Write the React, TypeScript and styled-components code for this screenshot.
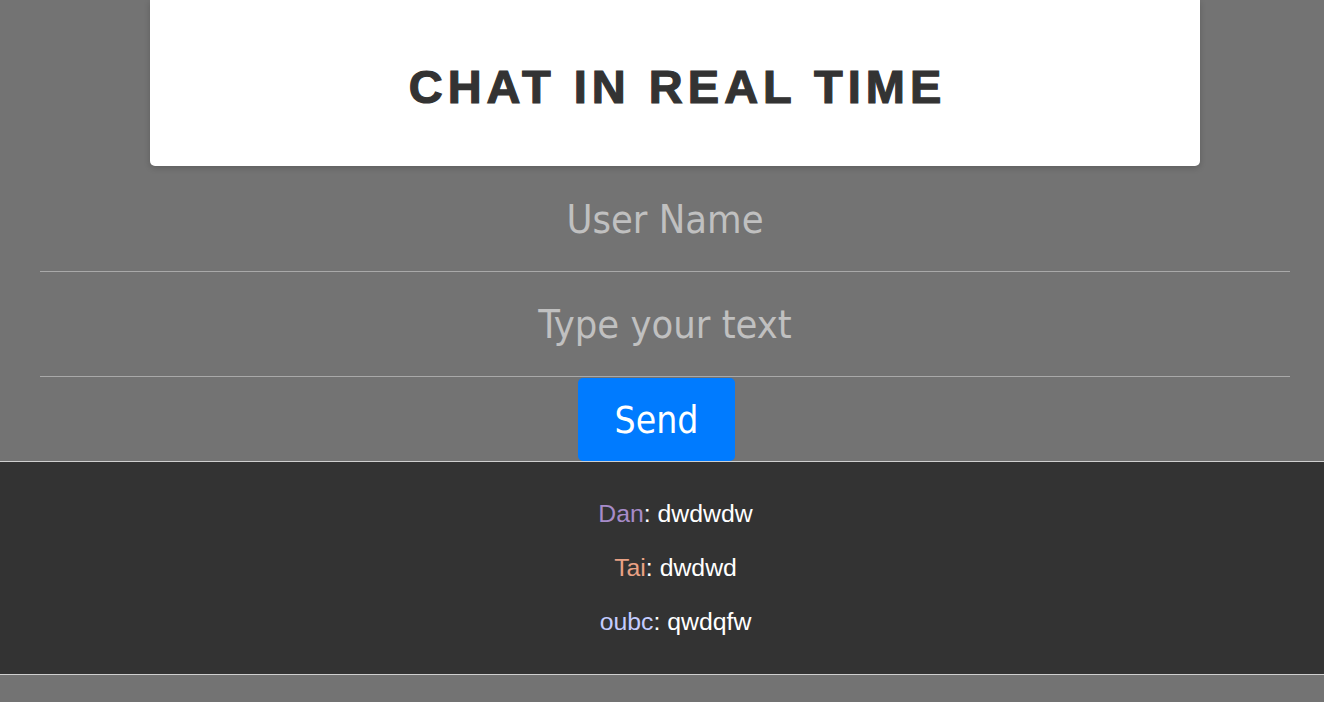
import React from "react";
import styled, { createGlobalStyle } from "styled-components";

const Global = createGlobalStyle`
  html, body { margin: 0; padding: 0; background: #737373; }
  body { font-family: "Liberation Sans", Arial, sans-serif; }
  * { box-sizing: border-box; }
`;

const Page = styled.div`
  display: flex;
  flex-direction: column;
  align-items: stretch;
  min-height: 702px;
  background: #737373;
`;

const Header = styled.header`
  margin: 0 124px 0 150px;
  height: 166px;
  background: #fff;
  border-radius: 0 0 5px 5px;
  box-shadow: 0 2px 6px rgba(0, 0, 0, 0.18);
  display: flex;
  align-items: center;
  justify-content: center;
  padding-top: 6px;
`;

const Title = styled.h1`
  margin: 0 0 0 5px;
  font-family: "Liberation Sans", Arial, sans-serif;
  font-weight: 900;
  font-size: 47px;
  letter-spacing: 5px;
  color: #333;
  -webkit-text-stroke: 1.2px #333;
  text-transform: uppercase;
`;

const Form = styled.form`
  display: flex;
  flex-direction: column;
  align-items: center;
  padding: 1px 34px 0 40px;
`;

const Field = styled.input`
  width: 100%;
  height: 105px;
  background: transparent;
  border: none;
  border-bottom: 1px solid #a9a9a9;
  outline: none;
  text-align: center;
  color: #fff;
  font-family: "DejaVu Sans Condensed", "DejaVu Sans", sans-serif;
  font-stretch: condensed;
  font-size: 39.5px;
  padding: 0;
  &::placeholder { color: #c0c0c0; }
`;

const SendButton = styled.button`
  margin: 1px 17px 0 0;
  width: 157px;
  height: 83px;
  background: #007bff;
  border: none;
  border-radius: 5px;
  color: #fff;
  font-family: "DejaVu Sans Condensed", "DejaVu Sans", sans-serif;
  font-stretch: condensed;
  font-size: 37px;
  padding: 2px 0 0;
  cursor: pointer;
`;

const Chat = styled.ul`
  list-style: none;
  margin: 0;
  padding: 37px 0 37px 27px;
  background: #333;
  border-top: 1px solid #cfcfcf;
  border-bottom: 1px solid #cfcfcf;
  display: flex;
  flex-direction: column;
  align-items: center;
  gap: 24px;
`;

const Message = styled.li`
  font-family: "Liberation Sans", Arial, sans-serif;
  font-size: 24.8px;
  line-height: 30px;
  color: #fff;
`;

const Author = styled.span<{ $color: string }>`
  color: ${(p) => p.$color};
`;

const messages = [
  { user: "Dan", text: "dwdwdw", color: "#a78bc9" },
  { user: "Tai", text: "dwdwd", color: "#e9a184" },
  { user: "oubc", text: "qwdqfw", color: "#c4ccff" },
];

export default function App() {
  return (
    <Page>
      <Global />
      <Header>
        <Title>Chat in real time</Title>
      </Header>
      <Form onSubmit={(e) => e.preventDefault()}>
        <Field placeholder="User Name" />
        <Field placeholder="Type your text" />
        <SendButton type="submit">Send</SendButton>
      </Form>
      <Chat>
        {messages.map((m) => (
          <Message key={m.user}>
            <Author $color={m.color}>{m.user}</Author>: {m.text}
          </Message>
        ))}
      </Chat>
    </Page>
  );
}
